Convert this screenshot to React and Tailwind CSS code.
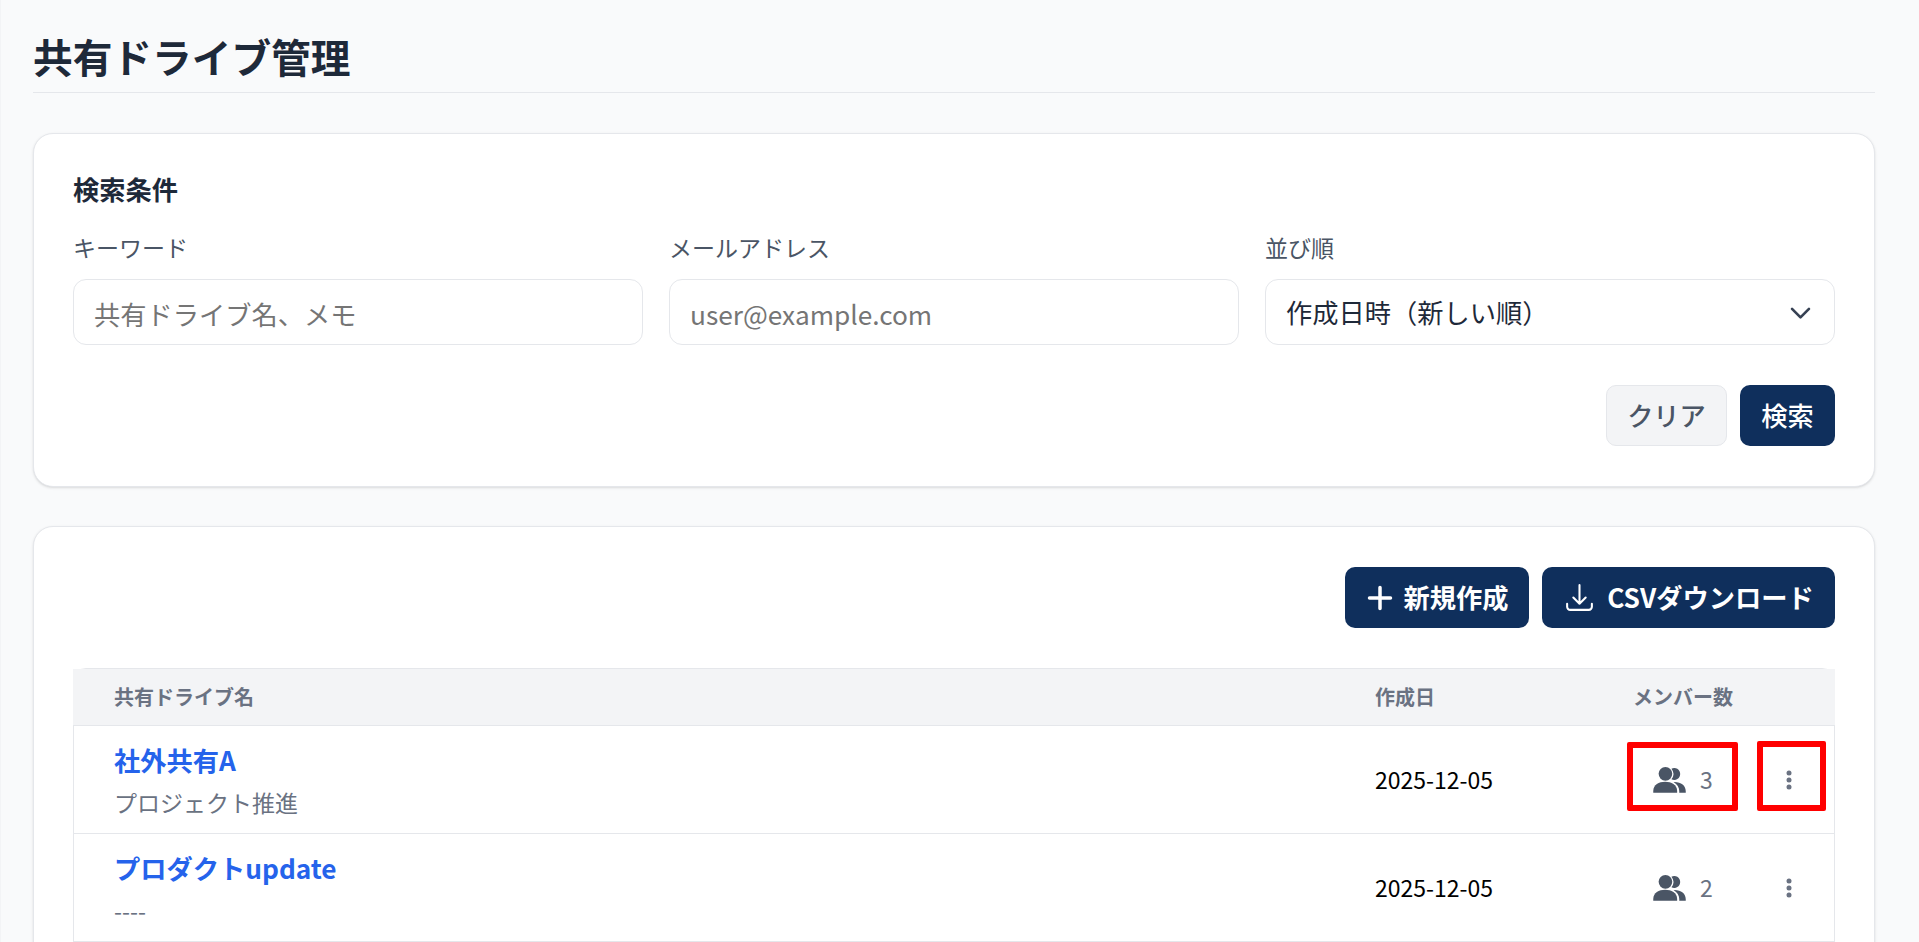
import React from "react";

function Users({ className }) {
  return (
    <svg viewBox="0 0 20 16" fill="currentColor" className={className}>
      <path d="M11.200 1a3.700 3.700 0 1 1 0 6.600 5.500 5.500 0 0 0 1.300-3.300 5.500 5.500 0 0 0-1.300-3.300Z" />
      <circle cx="7.500" cy="4.200" r="4.200" />
      <path d="M0 15.800v-1C0 10.900 3.500 9.100 7.300 9.100s7.400 1.800 7.400 5.700v1H0Z" />
      <path d="M12.500 9.300C17 9.100 20 11.400 20 14.900v.9h-4v-1C16 12.700 14.800 10.700 12.500 9.300Z" />
    </svg>
  );
}

function Dots() {
  return (
    <svg viewBox="0 0 6 20" fill="currentColor" className="w-[6px] h-[20px] text-gray-500">
      <circle cx="3" cy="3" r="2.500" />
      <circle cx="3" cy="10" r="2.500" />
      <circle cx="3" cy="17" r="2.500" />
    </svg>
  );
}

function Field({ label, children }) {
  return (
    <div className="flex flex-col">
      <label className="text-[23px] leading-[34px] text-gray-600 mb-[15px]">{label}</label>
      {children}
    </div>
  );
}

function Row({ name, memo, count, marked }) {
  return (
    <div className="relative flex h-[108px] border-b border-gray-200">
      <div className="flex-1 pl-[40px] flex flex-col justify-center">
        <a className="text-[26.250px] leading-[38px] font-bold text-[#2563eb]">{name}</a>
        <div className="text-[23px] leading-[34px] mt-[6px] text-gray-500">{memo}</div>
      </div>
      <div className="w-[260px] flex items-center text-[23px] text-black">2025-12-05</div>
      <div className="w-[113px] flex items-center pl-[18px] gap-[14px] text-gray-600 relative">
        <Users className="w-[33px] h-[26px]" />
        <span className="text-[23px] text-gray-500">{count}</span>
        {marked && <div className="absolute left-[-8px] top-[16px] w-[111px] h-[69px] border-[6px] border-[#ff0000] rounded-[2px]" />}
      </div>
      <div className="w-[86px] flex items-center justify-center pr-[5px] relative">
        <Dots />
        {marked && <div className="absolute left-[9px] top-[15px] w-[69px] h-[70px] border-[6px] border-[#ff0000] rounded-[2px]" />}
      </div>
    </div>
  );
}

export default function App() {
  return (
    <div className="h-[942px] overflow-hidden bg-gray-50 border-l border-gray-100 pl-[32px] pr-[44px]" style={{ fontFamily: '"Noto Sans CJK JP", sans-serif' }}>
      <div className="h-[93px] border-b border-gray-200 flex items-start pt-[26px]">
        <h1 className="text-[39.700px] leading-[60px] font-bold text-gray-800">共有ドライブ管理</h1>
      </div>
      <section className="mt-[40px] h-[354px] bg-white border border-gray-200 rounded-[20px] shadow-sm px-[39px] pt-[36px]">
        <h2 className="text-[26.250px] leading-[38px] font-bold text-gray-800 mb-[22px]">検索条件</h2>
        <div className="grid grid-cols-3 gap-[26px]">
          <Field label="キーワード">
            <input readOnly placeholder="共有ドライブ名、メモ" className="w-full h-[66px] border border-gray-200 rounded-[13px] px-[20px] pt-[4px] text-[26.250px] outline-none placeholder:text-[#757575]" />
          </Field>
          <Field label="メールアドレス">
            <input readOnly placeholder="user@example.com" className="w-full h-[66px] border border-gray-200 rounded-[13px] px-[20px] pt-[4px] text-[26.250px] outline-none placeholder:text-[#757575]" />
          </Field>
          <Field label="並び順">
            <div className="h-[66px] border border-gray-200 rounded-[13px] flex items-center justify-between pl-[20px] pr-[19px] text-[26.250px] text-gray-800">
              <span className="mt-[2px]">作成日時（新しい順）</span>
              <svg viewBox="0 0 24 24" fill="none" stroke="currentColor" strokeWidth="2.200" strokeLinecap="round" strokeLinejoin="round" className="w-[29px] h-[29px] text-gray-700"><path d="M5 9l7 7 7-7" /></svg>
            </div>
          </Field>
        </div>
        <div className="flex justify-end gap-[13px] mt-[40px]">
          <button className="h-[61px] w-[121px] rounded-[10px] bg-gray-100 border border-gray-200 text-[26.250px] font-medium text-gray-600">クリア</button>
          <button className="h-[61px] w-[95px] rounded-[10px] bg-[#0f2f5c] text-[26.250px] font-medium text-white">検索</button>
        </div>
      </section>
      <section className="mt-[39px] h-[700px] bg-white border border-gray-200 rounded-[20px] shadow-sm px-[39px] pt-[40px]">
        <div className="flex justify-end gap-[13px]">
          <button className="h-[61px] w-[184px] rounded-[10px] bg-[#0f2f5c] text-[26.250px] font-semibold text-white flex items-center justify-center gap-[10px]">
            <svg viewBox="0 0 24 24" fill="none" stroke="currentColor" strokeWidth="3" strokeLinecap="round" className="w-[28px] h-[28px]"><path d="M12 3v18M3 12h18" /></svg>
            新規作成
          </button>
          <button className="h-[61px] w-[293px] rounded-[10px] bg-[#0f2f5c] text-[26.250px] font-semibold text-white flex items-center justify-center gap-[11px]">
            <svg viewBox="0 0 24 24" fill="none" stroke="currentColor" strokeWidth="1.500" strokeLinecap="round" strokeLinejoin="round" className="w-[33px] h-[33px]"><path d="M3 16.500v2.250A2.250 2.250 0 0 0 5.250 21h13.500A2.250 2.250 0 0 0 21 18.750V16.500M16.500 12 12 16.500m0 0L7.500 12m4.500 4.500V3" /></svg>
            CSVダウンロード
          </button>
        </div>
        <div className="mt-[40px] border border-gray-200 rounded-[13px] h-[500px]">
          <div className="flex h-[57px] -mx-[1px] pl-[1px] pr-[1px] items-center bg-gray-100 border-b border-gray-200 text-[20px] font-bold text-gray-500">
            <div className="flex-1 pl-[40px]">共有ドライブ名</div>
            <div className="w-[258px]">作成日</div>
            <div className="w-[201px]">メンバー数</div>
          </div>
          <Row name="社外共有A" memo="プロジェクト推進" count="3" marked />
          <Row name="プロダクトupdate" memo="----" count="2" />
        </div>
      </section>
    </div>
  );
}
